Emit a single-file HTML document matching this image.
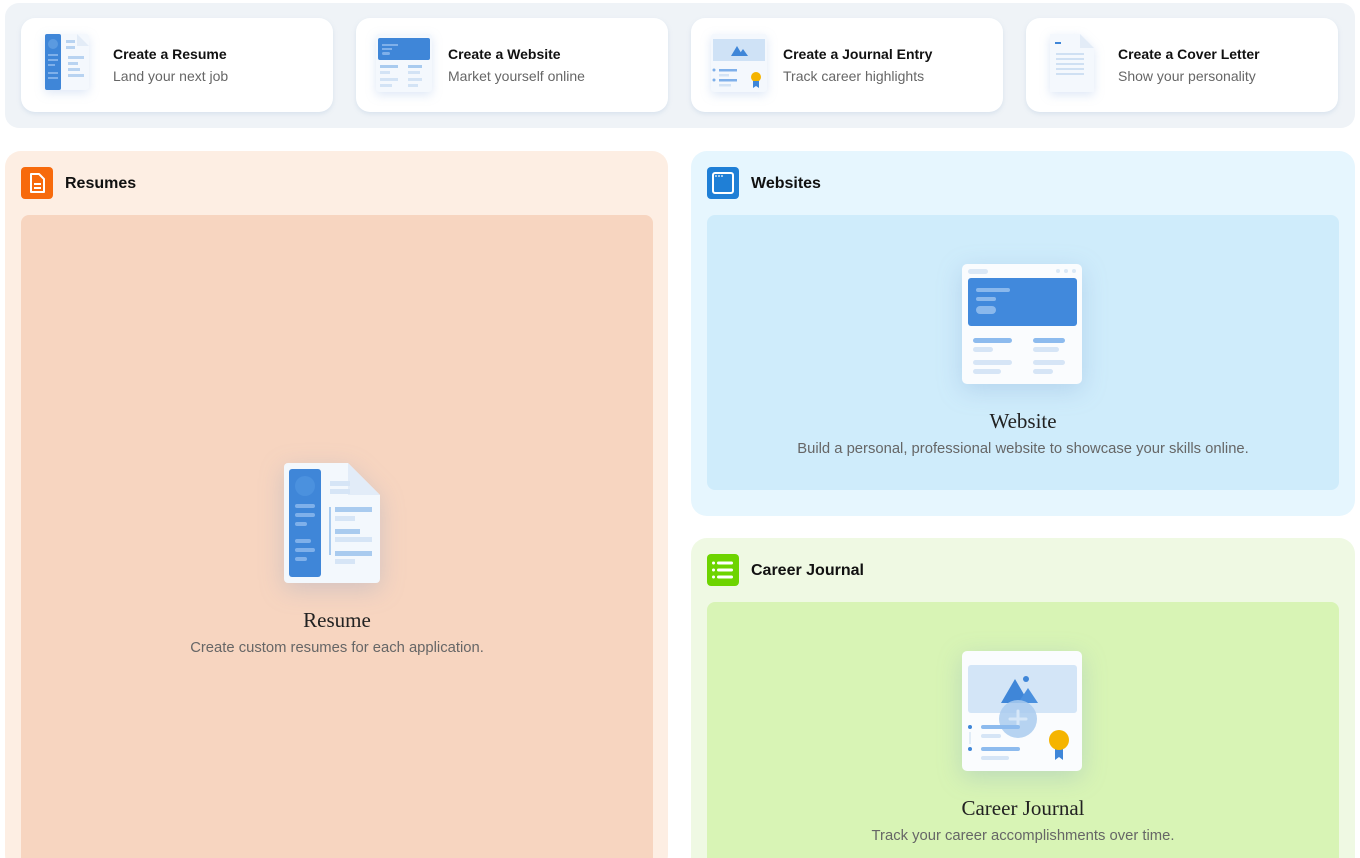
<!DOCTYPE html>
<html><head><meta charset="utf-8"><style>
*{box-sizing:border-box;margin:0;padding:0}
html,body{width:1360px;height:858px;overflow:hidden}
body{background:#fff;font-family:"Liberation Sans",sans-serif;position:relative}
.abs{position:absolute}
.top{left:5px;top:3px;width:1350px;height:125px;background:#eff3f7;border-radius:14px}
.card{top:18px;width:312px;height:94px;background:#fff;border-radius:14px;box-shadow:0 2px 4px rgba(150,180,210,.25)}
.card .ic{position:absolute;left:20px;top:14px;width:56px;height:66px;filter:drop-shadow(0 3px 5px rgba(120,160,220,.25))}
.card .t{position:absolute;left:92px;top:28px;font-size:14px;font-weight:bold;color:#111}
.card .s{position:absolute;left:92px;top:50px;font-size:14px;color:#666}
.panel{border-radius:16px}
.hic{width:32px;height:32px;border-radius:4px}
.ht{font-size:16px;font-weight:bold;color:#111}
.inner{border-radius:8px}
.ttl{font-family:"Liberation Serif",serif;font-size:21px;color:#222;text-align:center;width:100%}
.sub{font-size:14.8px;color:#666;text-align:center;width:100%}
.ill{filter:drop-shadow(0 6px 12px rgba(100,140,200,.25))}
</style></head><body>
<div class="abs top"></div>

<div class="abs card" style="left:21px">
<svg class="ic" viewBox="0 0 56 66"><rect x="4" y="2" width="44" height="56" rx="3" fill="#f4f8fd"/><path d="M36 2l12 12h-12z" fill="#e3ecf7"/><rect x="4" y="2" width="16" height="56" rx="2" fill="#3f86d8"/><circle cx="12" cy="12" r="5" fill="#5b9ae0"/><g fill="#7fb0ea"><rect x="7" y="22" width="10" height="2"/><rect x="7" y="27" width="10" height="2"/><rect x="7" y="32" width="7" height="2"/><rect x="7" y="40" width="10" height="2"/><rect x="7" y="45" width="10" height="2"/></g><g fill="#b8d3f1"><rect x="25" y="8" width="9" height="3"/><rect x="25" y="14" width="9" height="3"/><rect x="27" y="24" width="16" height="3"/><rect x="27" y="30" width="10" height="3"/><rect x="27" y="36" width="12" height="3"/><rect x="27" y="42" width="16" height="3"/></g></svg>
<div class="t">Create a Resume</div><div class="s">Land your next job</div></div>

<div class="abs card" style="left:356px">
<svg class="ic" viewBox="0 0 56 66"><rect x="0" y="2" width="56" height="58" rx="3" fill="#f4f8fd"/><rect x="2" y="6" width="52" height="22" rx="2" fill="#3f86d8"/><g fill="#7fb0ea"><rect x="6" y="12" width="16" height="2"/><rect x="6" y="16" width="10" height="2"/><rect x="6" y="20" width="8" height="3" rx="1.5"/></g><g fill="#a9cbef"><rect x="4" y="33" width="18" height="3"/><rect x="32" y="33" width="14" height="3"/></g><g fill="#d3e3f5"><rect x="4" y="39" width="10" height="3"/><rect x="32" y="39" width="12" height="3"/><rect x="4" y="46" width="18" height="3"/><rect x="32" y="46" width="14" height="3"/><rect x="4" y="52" width="12" height="3"/><rect x="32" y="52" width="10" height="3"/></g></svg>
<div class="t">Create a Website</div><div class="s">Market yourself online</div></div>

<div class="abs card" style="left:691px">
<svg class="ic" viewBox="0 0 56 66"><rect x="0" y="2" width="56" height="58" rx="3" fill="#f4f8fd"/><rect x="2" y="7" width="52" height="22" fill="#cfe2f6"/><path d="M20 24l6-10 6 10z" fill="#3f86d8"/><path d="M27 24l5-7 5 7z" fill="#3f86d8"/><g fill="#7fb0ea"><circle cx="3" cy="38" r="1.5"/><circle cx="3" cy="48" r="1.5"/><rect x="8" y="37" width="18" height="2.5"/><rect x="8" y="47" width="18" height="2.5"/></g><g fill="#d3e3f5"><rect x="8" y="42" width="10" height="2.5"/><rect x="8" y="52" width="12" height="2.5"/></g><circle cx="45" cy="45" r="5" fill="#f5b400"/><path d="M42 49v7l3-2 3 2v-7z" fill="#3f86d8"/></svg>
<div class="t">Create a Journal Entry</div><div class="s">Track career highlights</div></div>

<div class="abs card" style="left:1026px">
<svg class="ic" viewBox="0 0 56 66"><path d="M4 2h30l14 14v44H4z" fill="#f4f8fd"/><path d="M34 2l14 14H34z" fill="#e3ecf7"/><rect x="9" y="10" width="6" height="2" fill="#3f86d8"/><g fill="#cfe0f3"><rect x="10" y="21" width="28" height="2"/><rect x="10" y="26" width="28" height="2"/><rect x="10" y="31" width="28" height="2"/><rect x="10" y="36" width="28" height="2"/><rect x="10" y="41" width="28" height="2"/></g></svg>
<div class="t">Create a Cover Letter</div><div class="s">Show your personality</div></div>

<!-- Resumes -->
<div class="abs panel" style="left:5px;top:151px;width:663px;height:720px;background:#fdeee3"></div>
<div class="abs hic" style="left:21px;top:167px;background:#f76a0c"><svg width="32" height="32" viewBox="0 0 32 32"><path d="M10 7h8l5 5v13H10z" fill="none" stroke="#fff" stroke-width="2" stroke-linejoin="round"/><path d="M13 17h7M13 21h7" stroke="#fff" stroke-width="2"/></svg></div>
<div class="abs ht" style="left:65px;top:175px">Resumes</div>
<div class="abs inner" style="left:21px;top:215px;width:632px;height:660px;background:#f7d5c0">
<svg class="abs ill" style="left:263px;top:248px" width="96" height="120" viewBox="0 0 96 120"><path d="M0 4a4 4 0 0 1 4-4h60l32 32v84a4 4 0 0 1-4 4H4a4 4 0 0 1-4-4z" fill="#f3f8fd"/><path d="M64 0l32 32H64z" fill="#e2ecf8"/><rect x="5" y="6" width="32" height="108" rx="3" fill="#3f86d8"/><circle cx="21" cy="23" r="10" fill="#4b91de"/><g fill="#7fb0ea"><rect x="11" y="41" width="20" height="4" rx="2"/><rect x="11" y="50" width="20" height="4" rx="2"/><rect x="11" y="59" width="12" height="4" rx="2"/><rect x="11" y="76" width="16" height="4" rx="2"/><rect x="11" y="85" width="20" height="4" rx="2"/><rect x="11" y="94" width="12" height="4" rx="2"/></g><g fill="#d6e5f6"><rect x="46" y="18" width="20" height="5"/><rect x="46" y="26" width="20" height="5"/><rect x="51" y="53" width="20" height="5"/><rect x="51" y="74" width="37" height="5"/><rect x="51" y="96" width="20" height="5"/></g><g fill="#a9cbef"><rect x="45" y="44" width="2" height="48"/><rect x="51" y="44" width="37" height="5"/><rect x="51" y="66" width="25" height="5"/><rect x="51" y="88" width="37" height="5"/></g></svg>
<div class="abs ttl" style="left:0;top:393px">Resume</div>
<div class="abs sub" style="left:0;top:425px">Create custom resumes for each application.</div>
</div>

<!-- Websites -->
<div class="abs panel" style="left:691px;top:151px;width:664px;height:365px;background:#e6f6fe"></div>
<div class="abs hic" style="left:707px;top:167px;background:#1f7fd6"><svg width="32" height="32" viewBox="0 0 32 32"><rect x="6" y="6" width="20" height="20" rx="2" fill="none" stroke="#fff" stroke-width="2"/><circle cx="9" cy="9" r=".9" fill="#fff"/><circle cx="12" cy="9" r=".9" fill="#fff"/><circle cx="15" cy="9" r=".9" fill="#fff"/></svg></div>
<div class="abs ht" style="left:751px;top:175px">Websites</div>
<div class="abs inner" style="left:707px;top:215px;width:632px;height:275px;background:#cfecfb">
<svg class="abs ill" style="left:255px;top:49px" width="120" height="120" viewBox="0 0 120 120"><rect width="120" height="120" rx="5" fill="#fafcfe"/><rect x="6" y="5" width="20" height="5" rx="2.5" fill="#dbe8f6"/><g fill="#dbe8f6"><circle cx="96" cy="7" r="2"/><circle cx="104" cy="7" r="2"/><circle cx="112" cy="7" r="2"/></g><rect x="6" y="14" width="109" height="48" rx="3" fill="#4189dc"/><g fill="#8ab8ec"><rect x="14" y="24" width="34" height="4" rx="2"/><rect x="14" y="33" width="20" height="4" rx="2"/><rect x="14" y="42" width="20" height="8" rx="4"/></g><g fill="#8dbbee"><rect x="11" y="74" width="39" height="5" rx="2.5"/><rect x="71" y="74" width="32" height="5" rx="2.5"/></g><g fill="#d6e5f6"><rect x="11" y="83" width="20" height="5" rx="2.5"/><rect x="71" y="83" width="26" height="5" rx="2.5"/><rect x="11" y="96" width="39" height="5" rx="2.5"/><rect x="71" y="96" width="32" height="5" rx="2.5"/><rect x="11" y="105" width="28" height="5" rx="2.5"/><rect x="71" y="105" width="20" height="5" rx="2.5"/></g></svg>
<div class="abs ttl" style="left:0;top:194px">Website</div>
<div class="abs sub" style="left:0;top:226px">Build a personal, professional website to showcase your skills online.</div>
</div>

<!-- Career Journal -->
<div class="abs panel" style="left:691px;top:538px;width:664px;height:340px;background:#eff9e3"></div>
<div class="abs hic" style="left:707px;top:554px;background:#6dd400"><svg width="32" height="32" viewBox="0 0 32 32"><g fill="#fff"><circle cx="6.5" cy="9" r="1.5"/><circle cx="6.5" cy="16" r="1.5"/><circle cx="6.5" cy="23" r="1.5"/><rect x="10" y="7.5" width="16" height="3" rx="1.5"/><rect x="10" y="14.5" width="16" height="3" rx="1.5"/><rect x="10" y="21.5" width="16" height="3" rx="1.5"/></g></svg></div>
<div class="abs ht" style="left:751px;top:562px">Career Journal</div>
<div class="abs inner" style="left:707px;top:602px;width:632px;height:280px;background:#d8f4b5">
<svg class="abs ill" style="left:255px;top:49px" width="120" height="120" viewBox="0 0 120 120"><rect width="120" height="120" rx="5" fill="#fafcfe"/><rect x="6" y="14" width="109" height="48" rx="3" fill="#d3e5f7"/><path d="M39 52l14-24 14 24z" fill="#3f86d8"/><path d="M56 52l10-15 10 15z" fill="#4a90de"/><circle cx="64" cy="28" r="3" fill="#3f86d8"/><circle cx="56" cy="68" r="19" fill="#a9cbef" opacity=".85"/><path d="M56 60v16M48 68h16" stroke="#d6e7f8" stroke-width="3" stroke-linecap="round"/><g fill="#3f86d8"><circle cx="8" cy="76" r="2"/><circle cx="8" cy="98" r="2"/></g><rect x="7.5" y="81" width="1" height="12" fill="#c8dbf0"/><g fill="#8dbbee"><rect x="19" y="74" width="39" height="4" rx="2"/><rect x="19" y="96" width="39" height="4" rx="2"/></g><g fill="#d6e5f6"><rect x="19" y="83" width="20" height="4" rx="2"/><rect x="19" y="105" width="28" height="4" rx="2"/></g><path d="M93 97v12l4-3 4 3v-12z" fill="#3f86d8"/><circle cx="97" cy="89" r="10" fill="#f5b400"/></svg>
<div class="abs ttl" style="left:0;top:194px">Career Journal</div>
<div class="abs sub" style="left:0;top:226px">Track your career accomplishments over time.</div>
</div>
</body></html>
